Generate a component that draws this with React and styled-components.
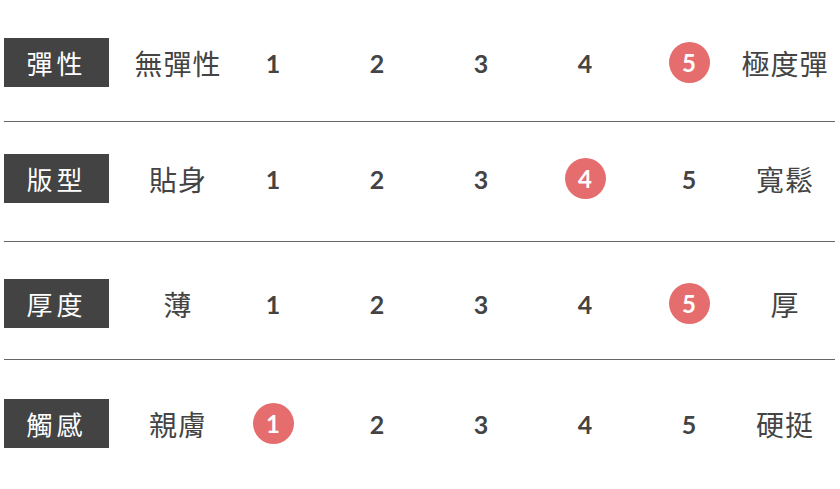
import React from "react";
import styled, { createGlobalStyle } from "styled-components";

const GlobalStyle = createGlobalStyle`
  body {
    margin: 0;
    background: #fff;
  }
`;

const rows = [
  { label: "彈性", low: "無彈性", high: "極度彈", value: 5, pt: 38, pb: 34 },
  { label: "版型", low: "貼身", high: "寬鬆", value: 4, pt: 32, pb: 38 },
  { label: "厚度", low: "薄", high: "厚", value: 5, pt: 37, pb: 31 },
  { label: "觸感", low: "親膚", high: "硬挺", value: 1, pt: 39, pb: 30 },
];

function App() {
  return (
    <>
      <GlobalStyle />
      <Table>
        {rows.map((row, i) => (
          <Row key={row.label} pt={row.pt} pb={row.pb} last={i === rows.length - 1}>
            <Label>{row.label}</Label>
            <Desc left>{row.low}</Desc>
            {[1, 2, 3, 4, 5].map((n) => (
              <Cell key={n}>
                {n === row.value ? <Dot>{n}</Dot> : <Num>{n}</Num>}
              </Cell>
            ))}
            <Desc>{row.high}</Desc>
          </Row>
        ))}
      </Table>
    </>
  );
}

const Table = styled.div`
  margin-left: 4px;
  width: 831px;
  font-family: "Noto Sans CJK TC", "Noto Sans", sans-serif;
  color: #444;
`;

const Row = styled.div`
  display: grid;
  grid-template-columns: 105px 112px repeat(5, 104px) 88px;
  align-items: center;
  padding-top: ${(p) => p.pt}px;
  padding-bottom: ${(p) => p.pb}px;
  border-bottom: ${(p) => (p.last ? "none" : "1px solid #666")};
`;

const Label = styled.div`
  height: 49px;
  background: #434343;
  color: #fff;
  display: flex;
  align-items: center;
  justify-content: center;
  font-size: 26px;
  letter-spacing: 4px;
  font-weight: 400;
`;

const Desc = styled.div`
  display: flex;
  justify-content: center;
  padding-left: ${(p) => (p.left ? "26px" : "0")};
  font-size: 28px;
  letter-spacing: 1px;
  white-space: nowrap;
  font-weight: 400;
  color: #444;
`;

const Cell = styled.div`
  display: flex;
  justify-content: center;
  align-items: center;
`;

const Num = styled.span`
  font-family: "Lato", "Liberation Sans", sans-serif;
  font-weight: 700;
  font-size: 25px;
  color: #444;
`;

const Dot = styled.span`
  width: 41px;
  height: 41px;
  border-radius: 50%;
  background: #e56d6e;
  color: #fff;
  display: flex;
  align-items: center;
  justify-content: center;
  font-family: "Lato", "Liberation Sans", sans-serif;
  font-weight: 700;
  font-size: 24px;
`;

export default App;
